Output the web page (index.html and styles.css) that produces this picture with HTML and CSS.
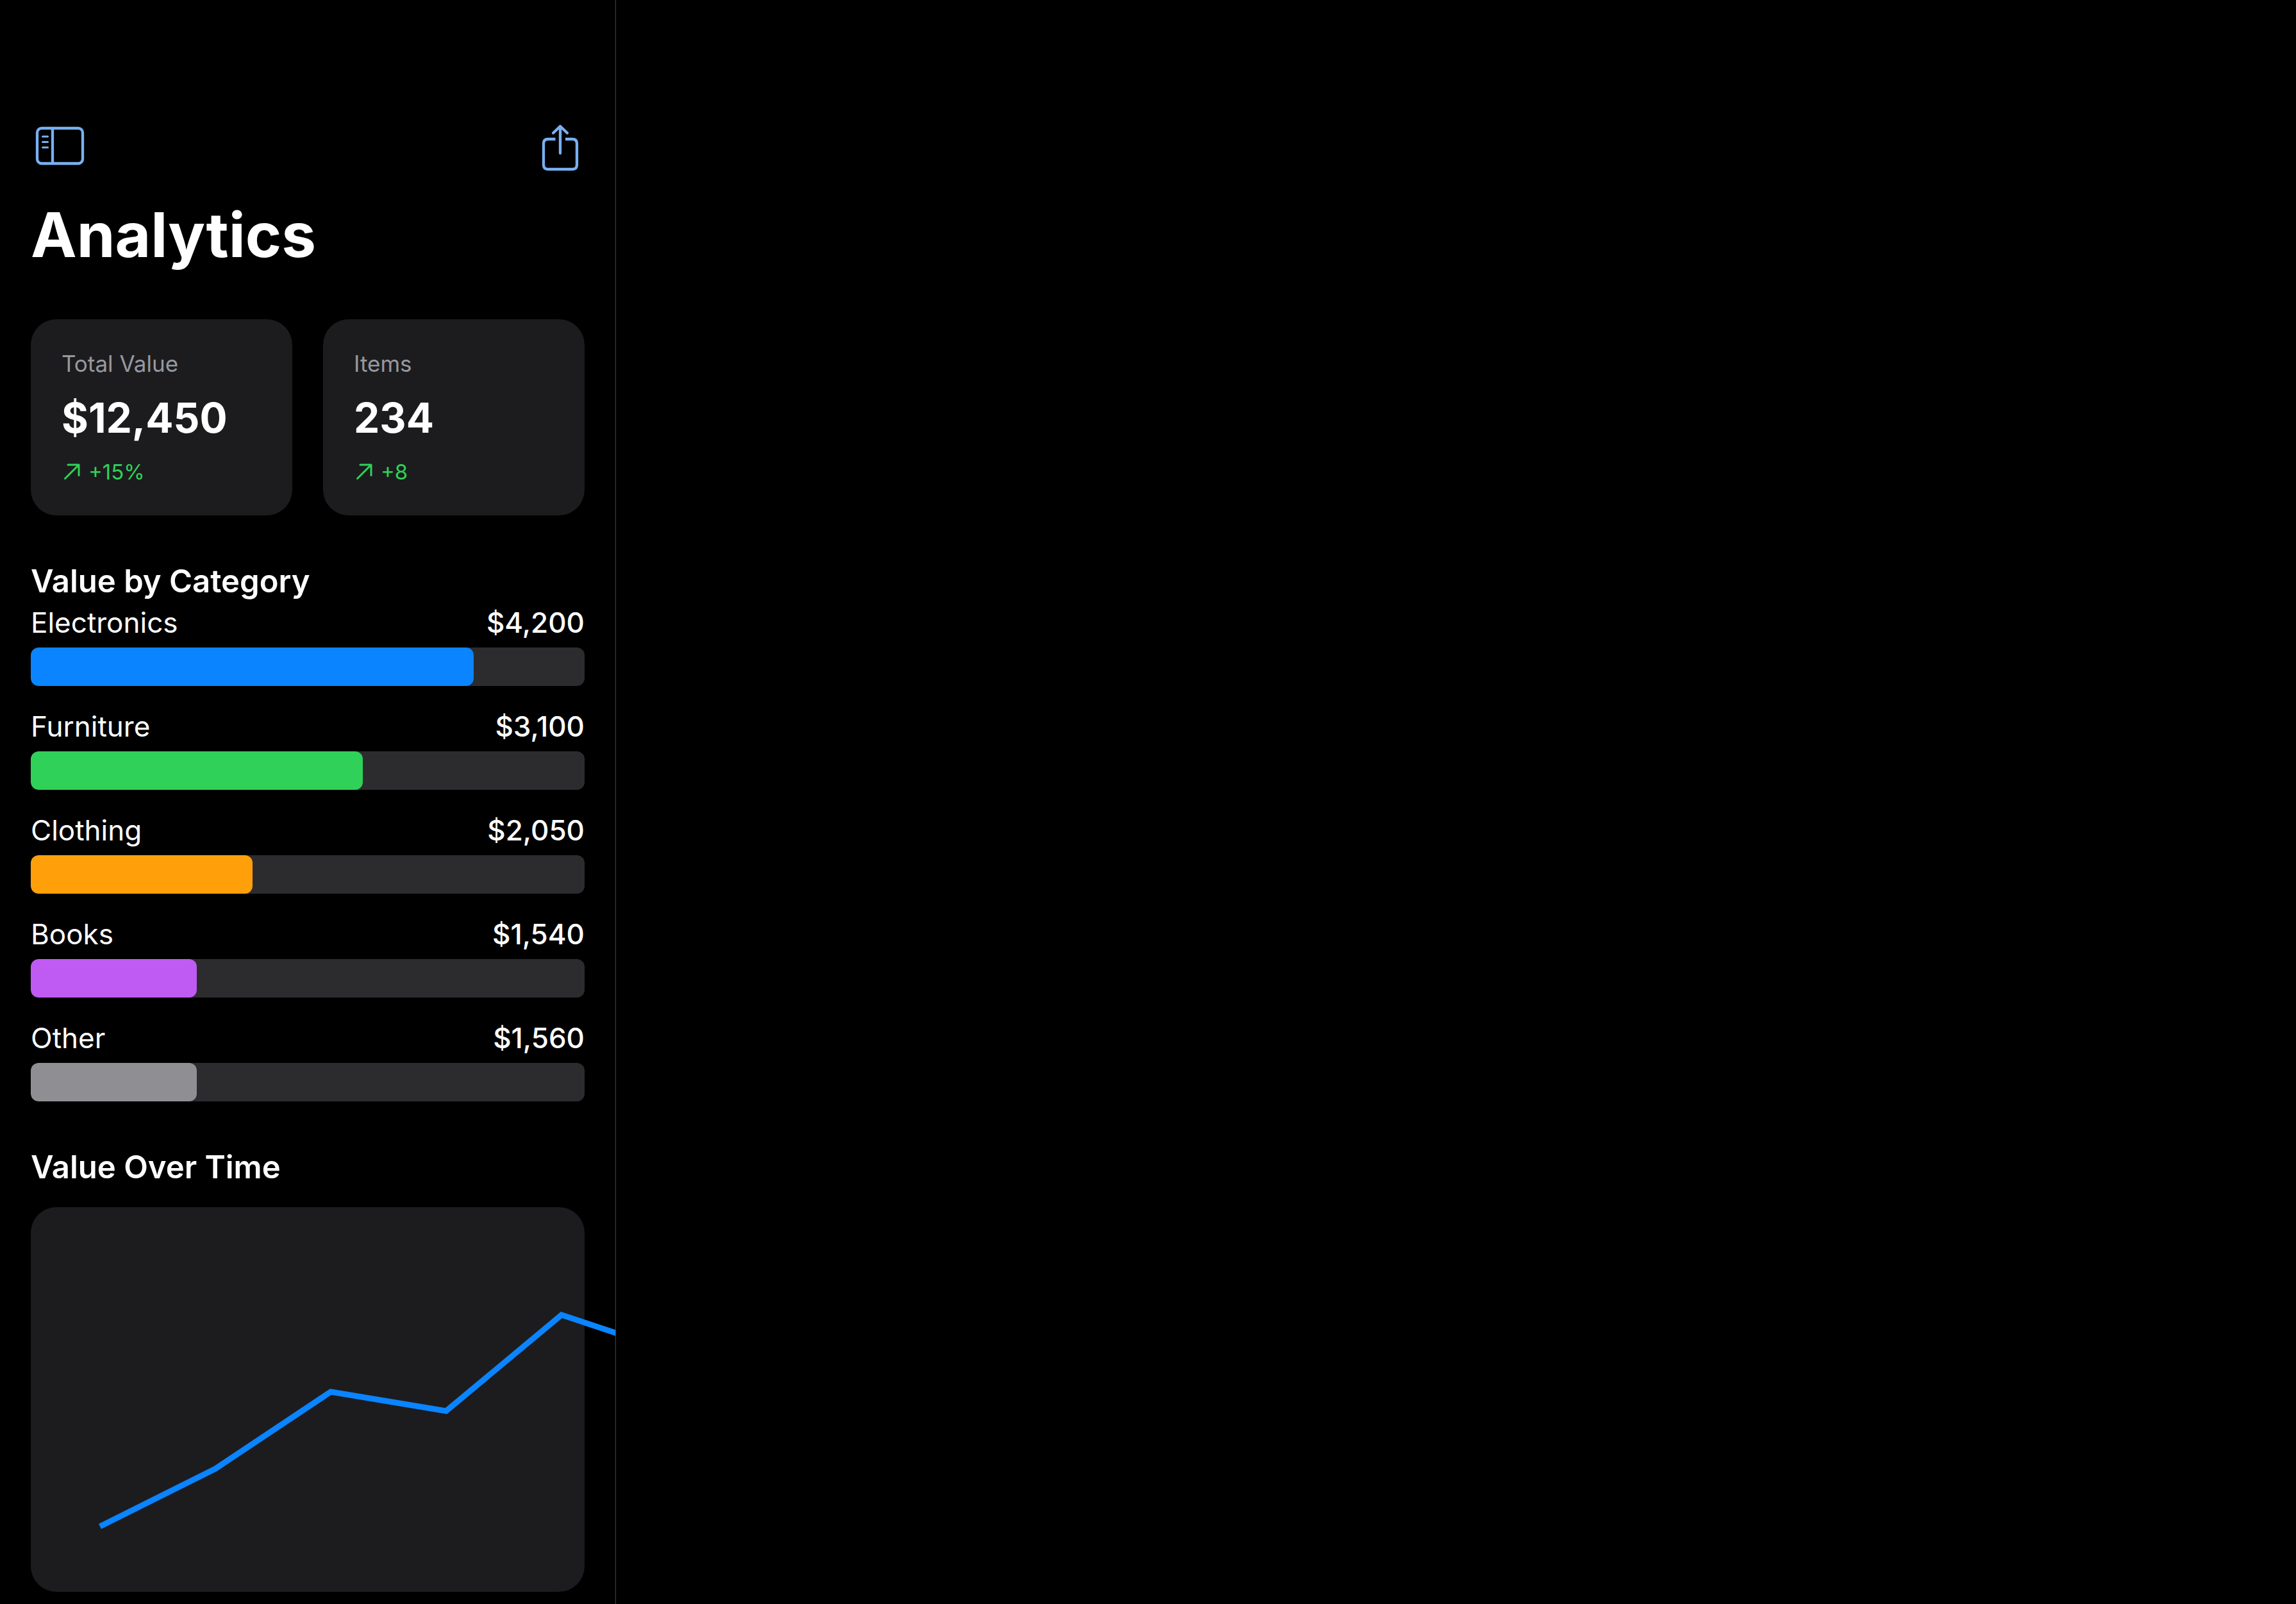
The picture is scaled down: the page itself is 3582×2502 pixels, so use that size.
FILE: index.html
```html
<!DOCTYPE html>
<html lang="en">
<head>
  <meta charset="utf-8">
  <meta name="viewport" content="width=device-width, initial-scale=1">
  <title>Analytics</title>
  <link rel="stylesheet" href="styles.css">
</head>
<body>
  <div class="app">
    <div class="sidebar">
      <div class="toolbar">
        <button class="icon-button" type="button" aria-label="Toggle sidebar">
          <svg class="icon" viewBox="0 0 84 84" aria-hidden="true">
            <rect x="10" y="14" width="71" height="55" rx="7"/>
            <path d="M34 14V69"/>
            <path class="icon-thin" d="M18.500 27H26.500M18.500 35.500H26.500M18.500 44H26.500"/>
          </svg>
        </button>
        <button class="icon-button" type="button" aria-label="Share">
          <svg class="icon" viewBox="0 0 84 84" aria-hidden="true">
            <path class="icon-butt" d="M38.500 31H27Q20 31 20 38V71Q20 78 27 78H65Q72 78 72 71V38Q72 31 65 31H54"/>
            <path d="M46 53V11M35 21.500L46 11L57 21.500"/>
          </svg>
        </button>
      </div>

      <main class="content">
        <h1 class="title">Analytics</h1>

        <section class="cards" aria-label="Summary">
          <article class="card">
            <span class="card-label">Total Value</span>
            <strong class="card-value">$12,450</strong>
            <span class="trend">
              <svg class="trend-icon" viewBox="0 0 30 30" aria-hidden="true"><path d="M5.500 25.500L27 4M10 4H27V20.500"/></svg>
              +15%
            </span>
          </article>
          <article class="card">
            <span class="card-label">Items</span>
            <strong class="card-value">234</strong>
            <span class="trend">
              <svg class="trend-icon" viewBox="0 0 30 30" aria-hidden="true"><path d="M5.500 25.500L27 4M10 4H27V20.500"/></svg>
              +8
            </span>
          </article>
        </section>

        <section class="categories">
          <h2 class="heading">Value by Category</h2>
          <ul class="category-list">
            <li class="category">
              <div class="category-text"><span>Electronics</span><span class="amount">$4,200</span></div>
              <div class="track"><div class="fill blue" style="width: 80%"></div></div>
            </li>
            <li class="category">
              <div class="category-text"><span>Furniture</span><span class="amount">$3,100</span></div>
              <div class="track"><div class="fill green" style="width: 60%"></div></div>
            </li>
            <li class="category">
              <div class="category-text"><span>Clothing</span><span class="amount">$2,050</span></div>
              <div class="track"><div class="fill orange" style="width: 40%"></div></div>
            </li>
            <li class="category">
              <div class="category-text"><span>Books</span><span class="amount">$1,540</span></div>
              <div class="track"><div class="fill purple" style="width: 30%"></div></div>
            </li>
            <li class="category">
              <div class="category-text"><span>Other</span><span class="amount">$1,560</span></div>
              <div class="track"><div class="fill gray" style="width: 30%"></div></div>
            </li>
          </ul>
        </section>

        <section class="history">
          <h2 class="heading">Value Over Time</h2>
          <div class="chart">
            <svg class="chart-plot" viewBox="0 0 864 600" role="img" aria-label="Value over time">
              <polyline points="108,498 288,408 468,288 648,318 828,168 1008,228"/>
            </svg>
          </div>
        </section>
      </main>
    </div>
    <div class="detail"></div>
  </div>
</body>
</html>
```

FILE: styles.css
```css
* {
  box-sizing: border-box;
}

body {
  margin: 0;
  background: #000;
  color: #fff;
  font-family: Inter, "Liberation Sans", sans-serif;
}

h1,
h2,
ul {
  margin: 0;
  padding: 0;
}

.app {
  display: flex;
  min-height: 100vh;
}

.sidebar {
  flex: 0 1 961px;
  min-width: 0;
  padding: 162px 48px 16px;
  border-right: 1px solid #414144;
  overflow: clip;
}

.detail {
  flex: 1;
}

.toolbar {
  display: flex;
  align-items: center;
  justify-content: space-between;
  height: 132px;
}

.icon-button {
  padding: 0;
  border: 0;
  background: none;
  color: #78b0f2;
  cursor: pointer;
}

.icon {
  display: block;
  width: 84px;
  height: 84px;
  fill: none;
  stroke: currentColor;
  stroke-width: 4.3;
  stroke-linecap: round;
  stroke-linejoin: round;
}

.icon-thin {
  stroke-width: 3;
}

.icon-butt {
  stroke-linecap: butt;
}

.content {
  display: flex;
  flex-direction: column;
  gap: 72px;
  padding-top: 12px;
}

.title {
  font-size: 96px;
  line-height: 120px;
  font-weight: 700;
}

.cards {
  display: grid;
  grid-template-columns: 1fr 1fr;
  gap: 48px;
}

.card {
  display: flex;
  flex-direction: column;
  gap: 24px;
  padding: 48px;
  border-radius: 40px;
  background: #1c1c1e;
}

.card-label {
  color: #98989f;
  font-size: 35px;
  line-height: 42px;
}

.card-value {
  font-size: 64px;
  line-height: 80px;
  font-weight: 700;
}

.trend {
  display: flex;
  align-items: center;
  gap: 12px;
  color: #30d158;
  font-size: 33px;
  line-height: 40px;
}

.trend-icon {
  width: 30px;
  height: 30px;
  fill: none;
  stroke: currentColor;
  stroke-width: 3;
  stroke-linecap: round;
  stroke-linejoin: round;
}

.heading {
  font-size: 49px;
  line-height: 62px;
  font-weight: 600;
}

.category-list {
  display: flex;
  flex-direction: column;
  gap: 36px;
  margin-top: 6px;
  list-style: none;
}

.category {
  display: flex;
  flex-direction: column;
  gap: 12px;
}

.category-text {
  display: flex;
  justify-content: space-between;
  font-size: 44px;
  line-height: 54px;
}

.amount {
  font-weight: 500;
}

.track {
  height: 60px;
  border-radius: 12px;
  background: #2c2c2e;
  overflow: hidden;
}

.fill {
  height: 100%;
  border-radius: 12px;
}

.blue {
  background: #0a84ff;
}

.green {
  background: #30d158;
}

.orange {
  background: #ff9f0a;
}

.purple {
  background: #bf5af2;
}

.gray {
  background: #8e8e93;
}

.chart {
  margin-top: 31px;
  border-radius: 40px;
  background: #1c1c1e;
}

.chart-plot {
  display: block;
  width: 100%;
  overflow: visible;
  fill: none;
  stroke: #0a84ff;
  stroke-width: 9;
}
```
